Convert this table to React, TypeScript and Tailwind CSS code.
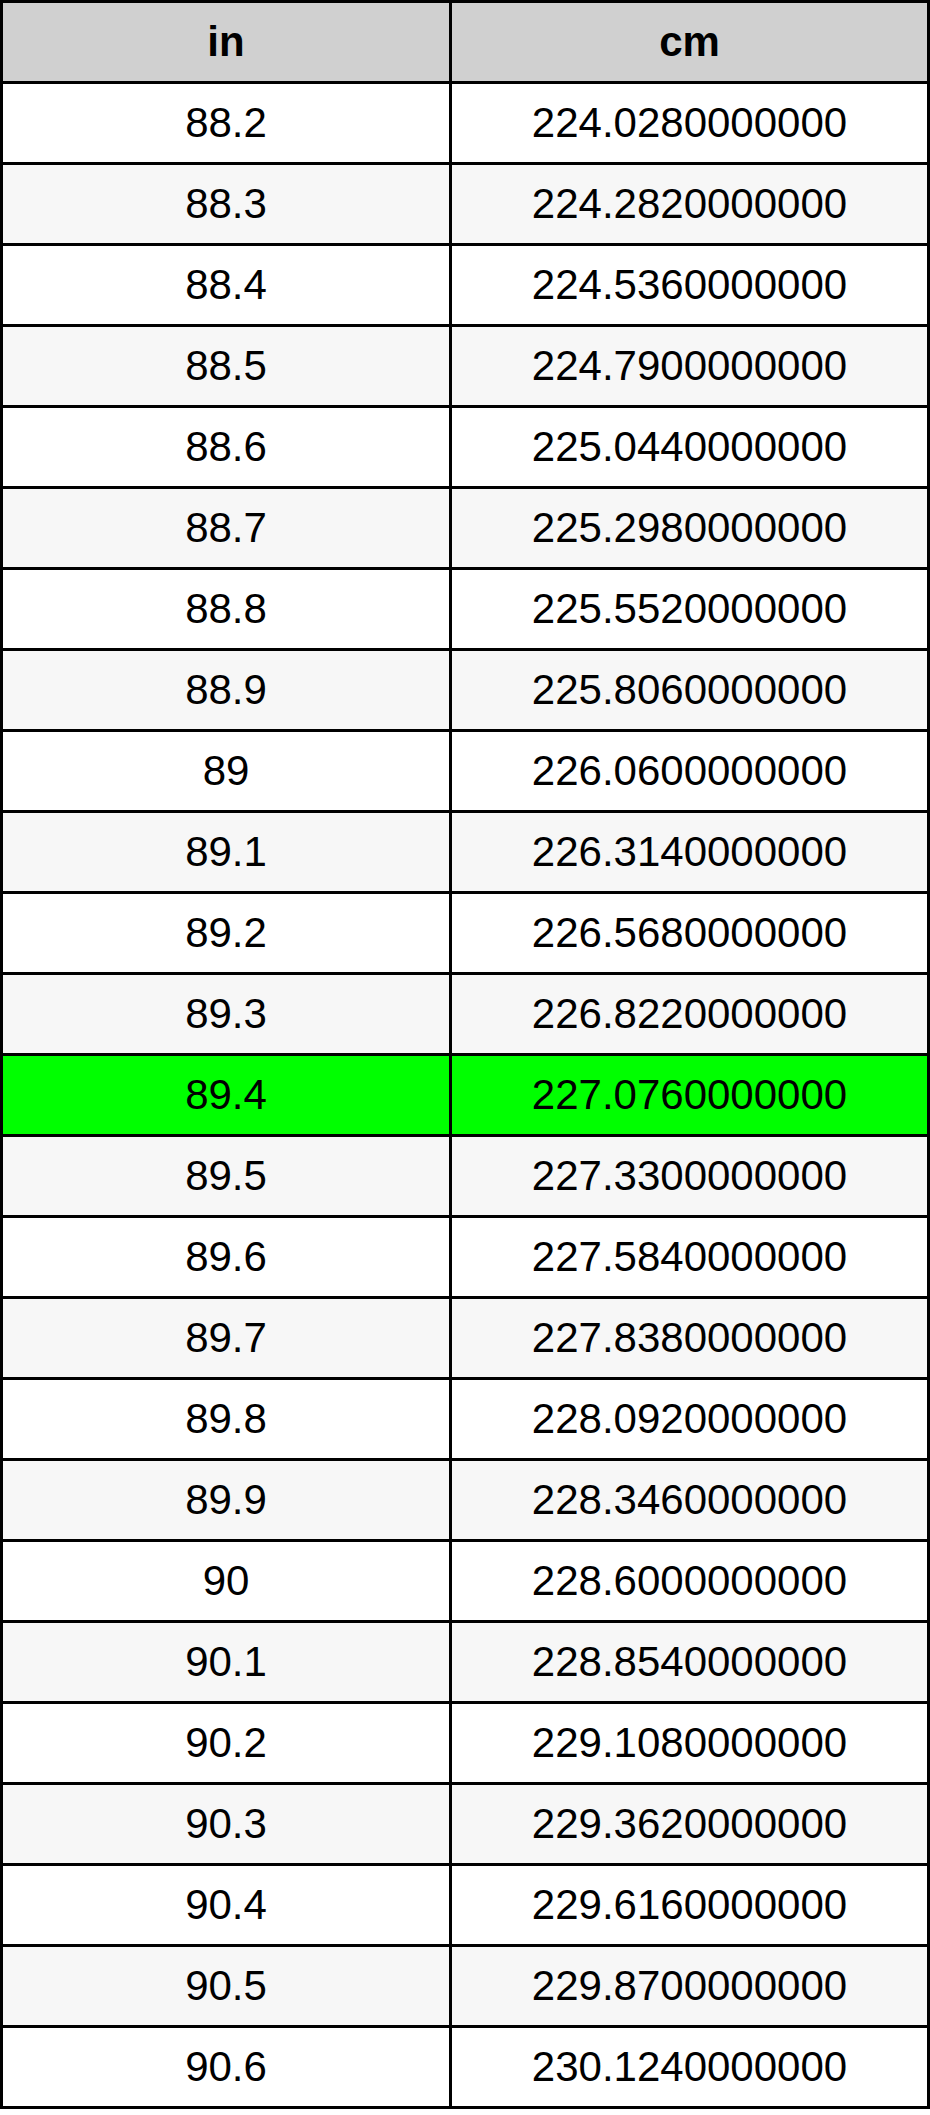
const rows: [string, string][] = [
  ["88.2", "224.0280000000"],
  ["88.3", "224.2820000000"],
  ["88.4", "224.5360000000"],
  ["88.5", "224.7900000000"],
  ["88.6", "225.0440000000"],
  ["88.7", "225.2980000000"],
  ["88.8", "225.5520000000"],
  ["88.9", "225.8060000000"],
  ["89", "226.0600000000"],
  ["89.1", "226.3140000000"],
  ["89.2", "226.5680000000"],
  ["89.3", "226.8220000000"],
  ["89.4", "227.0760000000"],
  ["89.5", "227.3300000000"],
  ["89.6", "227.5840000000"],
  ["89.7", "227.8380000000"],
  ["89.8", "228.0920000000"],
  ["89.9", "228.3460000000"],
  ["90", "228.6000000000"],
  ["90.1", "228.8540000000"],
  ["90.2", "229.1080000000"],
  ["90.3", "229.3620000000"],
  ["90.4", "229.6160000000"],
  ["90.5", "229.8700000000"],
  ["90.6", "230.1240000000"],
];

export default function App() {
  return (
    <div className="bg-white font-['Liberation_Sans',Arial,sans-serif] text-black">
      <table className="w-[930px] table-fixed border-separate border-spacing-0 border-l-[3px] border-t-[3px] border-black text-[42px] leading-none">
        <thead>
          <tr className="bg-[#d0d0d0]">
            <th className="h-[81px] w-[449px] border-b-[3px] border-r-[3px] border-black p-0 text-center font-bold">in</th>
            <th className="h-[81px] border-b-[3px] border-r-[3px] border-black p-0 text-center font-bold">cm</th>
          </tr>
        </thead>
        <tbody>
          {rows.map(([inch, cm], i) => {
            // the current value is highlighted, the rest alternate white / light grey
            const bg = inch === "89.4" ? "bg-[#00ff00]" : i % 2 === 1 ? "bg-[#f7f7f7]" : "bg-white";
            return (
              <tr key={inch} className={bg}>
                <td className="h-[81px] border-b-[3px] border-r-[3px] border-black p-0 text-center">{inch}</td>
                <td className="h-[81px] border-b-[3px] border-r-[3px] border-black p-0 text-center">{cm}</td>
              </tr>
            );
          })}
        </tbody>
      </table>
    </div>
  );
}
